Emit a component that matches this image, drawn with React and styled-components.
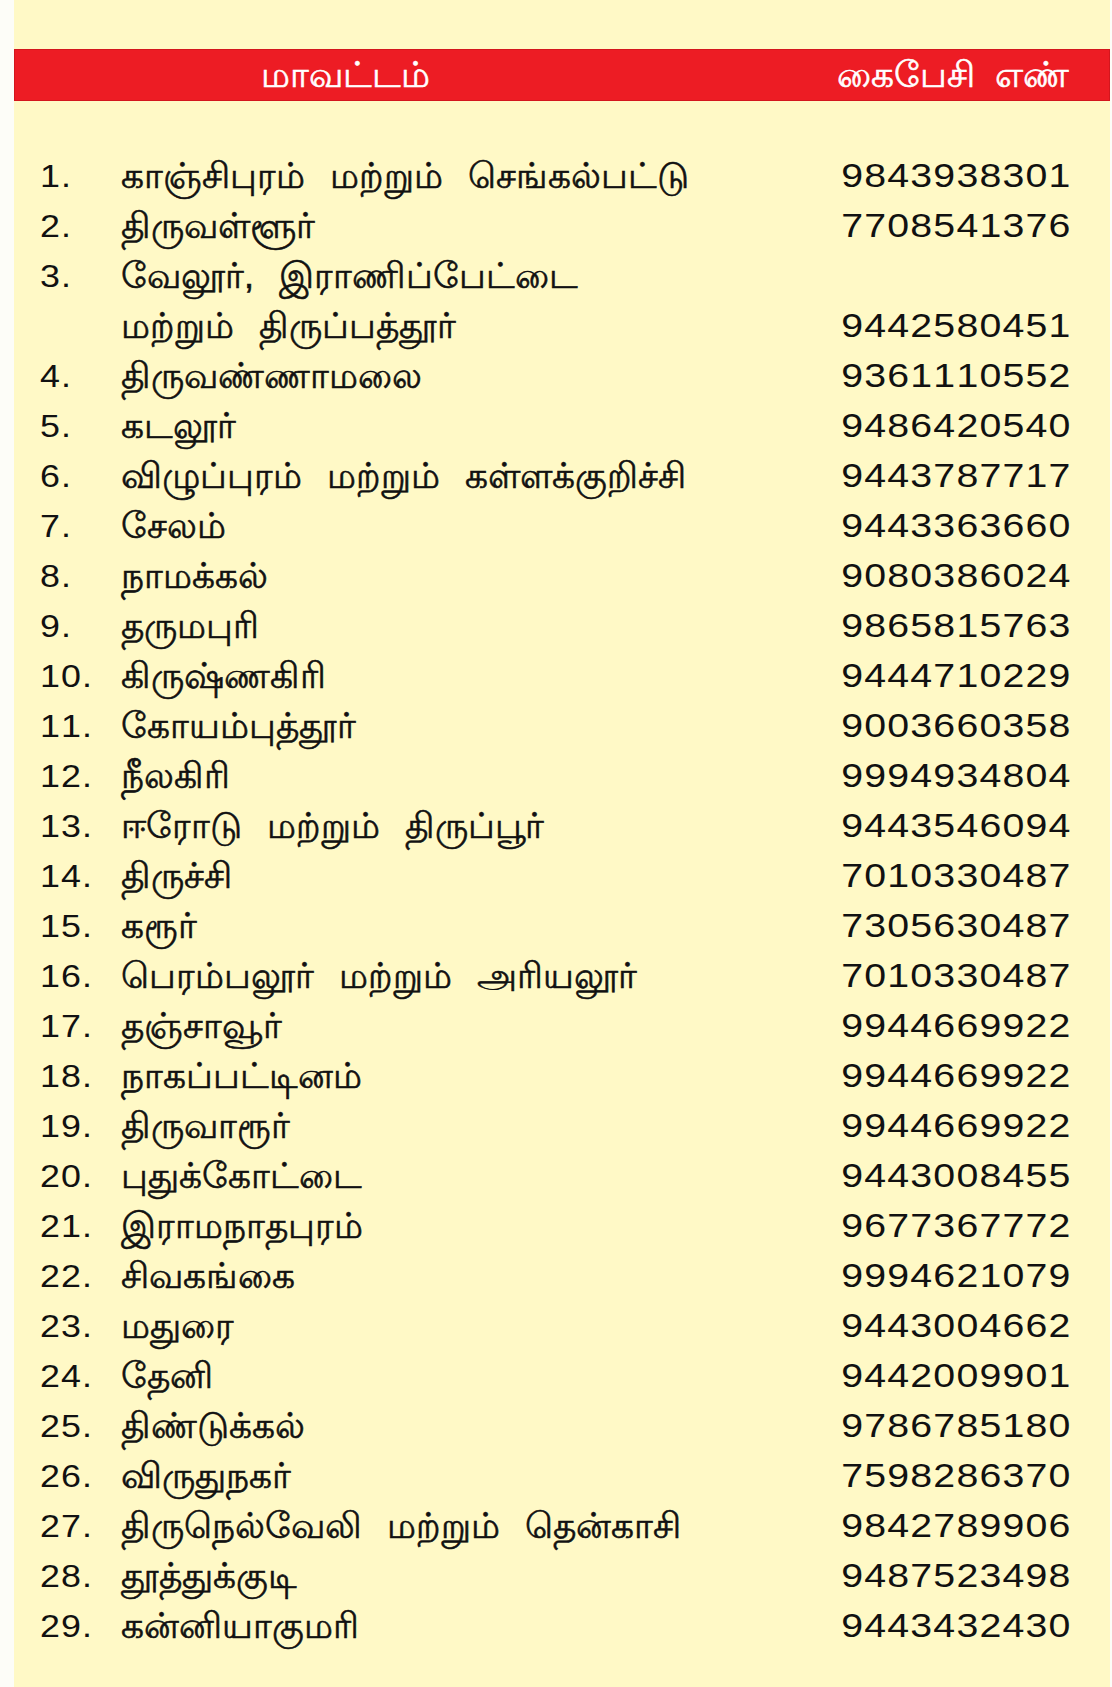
import styled, { createGlobalStyle } from "styled-components";

const rows = [
  ["காஞ்சிபுரம் மற்றும் செங்கல்பட்டு", "9843938301"],
  ["திருவள்ளூர்", "7708541376"],
  [["வேலூர், இராணிப்பேட்டை", "மற்றும் திருப்பத்தூர்"], "9442580451"],
  ["திருவண்ணாமலை", "9361110552"],
  ["கடலூர்", "9486420540"],
  ["விழுப்புரம் மற்றும் கள்ளக்குறிச்சி", "9443787717"],
  ["சேலம்", "9443363660"],
  ["நாமக்கல்", "9080386024"],
  ["தருமபுரி", "9865815763"],
  ["கிருஷ்ணகிரி", "9444710229"],
  ["கோயம்புத்தூர்", "9003660358"],
  ["நீலகிரி", "9994934804"],
  ["ஈரோடு மற்றும் திருப்பூர்", "9443546094"],
  ["திருச்சி", "7010330487"],
  ["கரூர்", "7305630487"],
  ["பெரம்பலூர் மற்றும் அரியலூர்", "7010330487"],
  ["தஞ்சாவூர்", "9944669922"],
  ["நாகப்பட்டினம்", "9944669922"],
  ["திருவாரூர்", "9944669922"],
  ["புதுக்கோட்டை", "9443008455"],
  ["இராமநாதபுரம்", "9677367772"],
  ["சிவகங்கை", "9994621079"],
  ["மதுரை", "9443004662"],
  ["தேனி", "9442009901"],
  ["திண்டுக்கல்", "9786785180"],
  ["விருதுநகர்", "7598286370"],
  ["திருநெல்வேலி மற்றும் தென்காசி", "9842789906"],
  ["தூத்துக்குடி", "9487523498"],
  ["கன்னியாகுமரி", "9443432430"],
];

const GlobalStyle = createGlobalStyle`
  body {
    margin: 0;
    background: #fdfdf8;
    font-family: "Liberation Sans", "Noto Sans", sans-serif;
    color: #111;
  }
`;

const Sheet = styled.div`
  margin-left: 14px;
  margin-right: 2px;
  height: 1687px;
  background: #fff9c6;
  padding-top: 49px;
  box-sizing: border-box;
`;

const HeaderBar = styled.div`
  height: 52px;
  background: #ed1c24;
  border: 1px solid #d3161d;
  box-sizing: border-box;
  display: grid;
  grid-template-columns: 660px 1fr;
  align-items: center;
  color: #fff;
  font-size: 36px;
  word-spacing: 10px;
  -webkit-text-stroke: 0.6px #fff;
  padding-right: 40px;
  line-height: 1;
`;

const HeadCell = styled.div`
  text-align: ${(p) => p.align || "center"};
`;

const List = styled.div`
  padding: 50px 42px 0 26px;
`;

const Row = styled.div`
  display: grid;
  grid-template-columns: 81px 1fr auto;
  line-height: 50px;
  font-size: 32px;
  font-kerning: none;
  font-variant-numeric: tabular-nums;
`;

const Num = styled.div`
  letter-spacing: 1px;
  transform: scaleX(1.12);
  transform-origin: left center;
`;

const Name = styled.div`
  font-size: 36px;
  word-spacing: 15px;
  -webkit-text-stroke: 0.6px #111;
`;

const Phone = styled.div`
  align-self: end;
  font-size: 33px;
  letter-spacing: 1px;
  margin-right: -4px;
  transform: scaleX(1.19);
  transform-origin: right center;
`;

export default function App() {
  return (
    <>
      <GlobalStyle />
      <Sheet>
        <HeaderBar>
          <HeadCell>மாவட்டம்</HeadCell>
          <HeadCell align="right">கைபேசி எண்</HeadCell>
        </HeaderBar>
        <List>
          {rows.map(([name, phone], i) => (
            <Row key={i}>
              <Num>{i + 1}.</Num>
              <Name>
                {Array.isArray(name)
                  ? name.map((n) => <div key={n}>{n}</div>)
                  : name}
              </Name>
              <Phone>{phone}</Phone>
            </Row>
          ))}
        </List>
      </Sheet>
    </>
  );
}
